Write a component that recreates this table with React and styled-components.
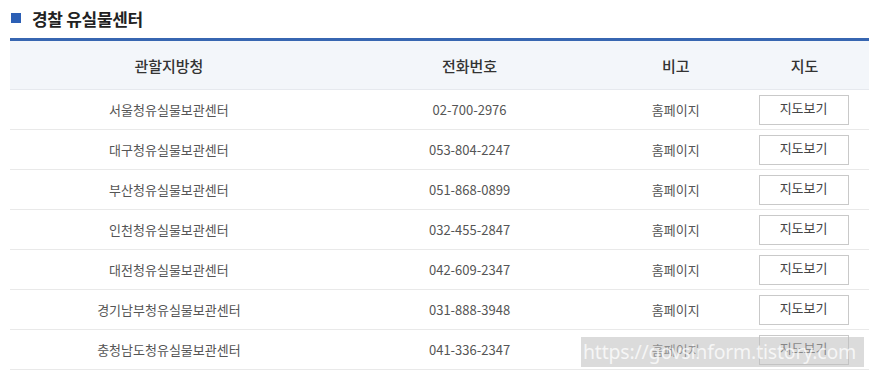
import React from 'react';
import styled, { createGlobalStyle } from 'styled-components';

const GlobalStyle = createGlobalStyle`
  body {
    margin: 0;
    background: #fff;
    font-family: "Noto Sans CJK KR", "Noto Sans", sans-serif;
  }
`;

const Wrap = styled.div`
  position: relative;
  width: 889px;
  height: 383px;
  padding: 0 20px 0 10px;
  box-sizing: border-box;
`;

const Title = styled.h2`
  display: flex;
  align-items: center;
  gap: 11px;
  margin: 0;
  height: 36px;
  padding-left: 1px;
  font-size: 17px;
  font-weight: 700;
  color: #222;
  letter-spacing: -0.3px;
`;

const Square = styled.span`
  width: 10px;
  height: 10px;
  background: #2c5fb5;
`;

const Table = styled.table`
  width: 100%;
  margin-top: 2px;
  border-collapse: collapse;
  table-layout: fixed;
  border-top: 3px solid #3766b1;
`;

const HeadCell = styled.th`
  width: ${p => p.$w};
  height: 48px;
  padding: 0;
  background: #f3f6fa;
  border-bottom: 1px solid #e6e9ee;
  font-size: 15px;
  font-weight: 500;
  color: #333;
  text-align: center;
`;

const Cell = styled.td`
  height: 39px;
  padding: 0;
  border-bottom: 1px solid #e9e9e9;
  font-size: 13px;
  color: #555;
  text-align: center;
`;

const MapButton = styled.button`
  width: 90px;
  height: 30px;
  padding: 0 0 5px;
  background: #fff;
  border: 1px solid #c9c9c9;
  font-family: inherit;
  font-size: 13px;
  color: #444;
  margin-left: -2px;
`;

const Watermark = styled.div`
  position: absolute;
  left: 581px;
  top: 337px;
  width: 281px;
  height: 30px;
  background: rgba(190, 190, 190, 0.55);
  color: rgba(255, 255, 255, 0.75);
  font-family: "Noto Sans", sans-serif;
  font-size: 19.5px;
  line-height: 30px;
  white-space: nowrap;
  overflow: hidden;
  padding-left: 2px;
  letter-spacing: -0.2px;
`;

const rows = [
  ['서울청유실물보관센터', '02-700-2976'],
  ['대구청유실물보관센터', '053-804-2247'],
  ['부산청유실물보관센터', '051-868-0899'],
  ['인천청유실물보관센터', '032-455-2847'],
  ['대전청유실물보관센터', '042-609-2347'],
  ['경기남부청유실물보관센터', '031-888-3948'],
  ['충청남도청유실물보관센터', '041-336-2347'],
];

export default function App() {
  return (
    <Wrap>
      <GlobalStyle />
      <Title><Square />경찰 유실물센터</Title>
      <Table>
        <thead>
          <tr>
            <HeadCell $w="37%">관할지방청</HeadCell>
            <HeadCell $w="33%">전화번호</HeadCell>
            <HeadCell $w="15%">비고</HeadCell>
            <HeadCell $w="15%">지도</HeadCell>
          </tr>
        </thead>
        <tbody>
          {rows.map(([name, tel]) => (
            <tr key={name}>
              <Cell>{name}</Cell>
              <Cell>{tel}</Cell>
              <Cell>홈페이지</Cell>
              <Cell><MapButton>지도보기</MapButton></Cell>
            </tr>
          ))}
        </tbody>
      </Table>
      <Watermark>https://govsinform.tistory.com</Watermark>
    </Wrap>
  );
}
